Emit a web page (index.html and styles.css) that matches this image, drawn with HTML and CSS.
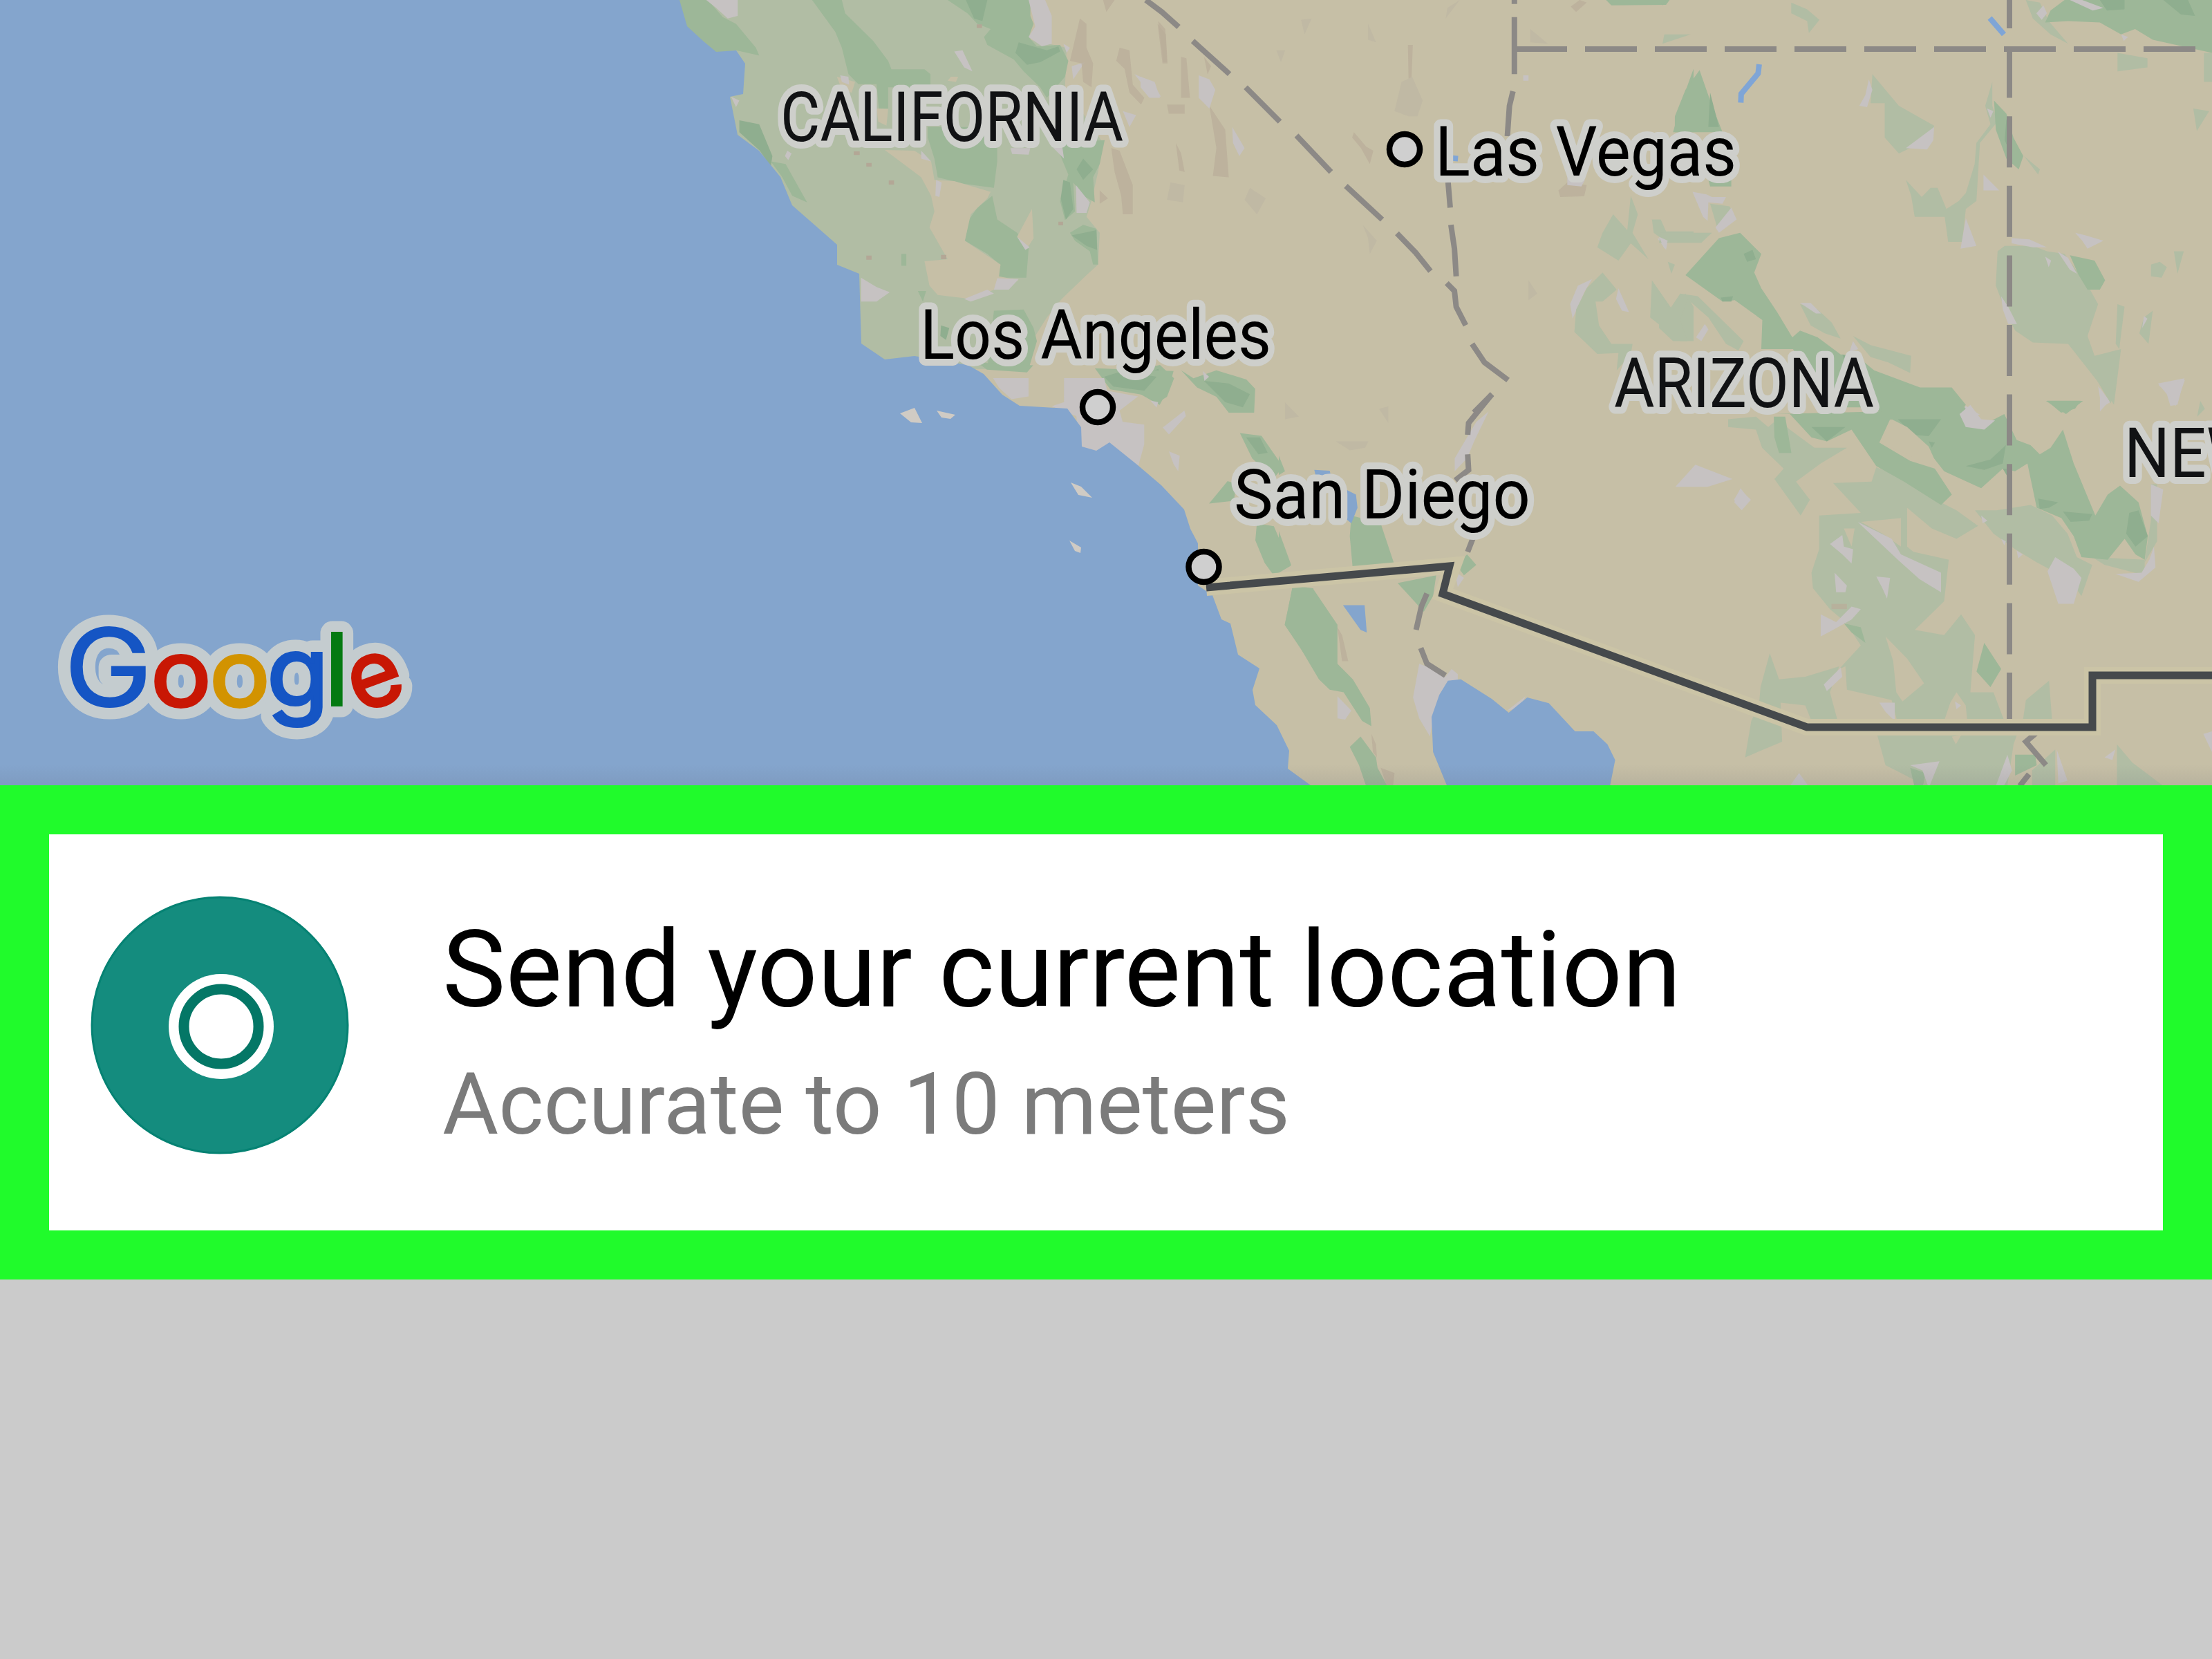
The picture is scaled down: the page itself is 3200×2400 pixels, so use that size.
FILE: index.html
```html
<!DOCTYPE html>
<html lang="en">
<head>
<meta charset="utf-8">
<title>Send location</title>
<link rel="stylesheet" href="styles.css">
</head>
<body>
<main class="screen">
  <section class="map">
    <svg class="map-canvas" viewBox="0 0 3200 1136" width="3200" height="1136">
      <defs>
        <linearGradient id="edge" x1="0" y1="0" x2="0" y2="1">
          <stop offset="0" stop-color="#555566" stop-opacity="0"/>
          <stop offset="1" stop-color="#555566" stop-opacity=".12"/>
        </linearGradient>
      </defs>

      <!-- northern and central California -->
      <g transform="translate(950 0) scale(.4783 .38265)">
        <path class="pale" d="M0 0H1130L1130 150L1240 180L1235 330L1350 540L1335 650L1315 760L1300 820L1340 880L1335 1000L1300 1040L1225 1130L1180 1200L1130 1300L1120 1395H500L0 1000Z"/>
        <path class="green" d="M60 0H155L200 65L240 90L300 180L310 210L240 190L180 200L90 100ZM470 0H560L570 50L655 155L700 230L710 262H810L828 280V330H700V410H672L665 318H610L580 280L560 180L540 120ZM880 0H1130V60L1140 90L1125 140L1150 175L1220 170L1245 230L1235 290L1180 370L1160 330L1110 270L1080 225L1000 170L990 140L1010 110L970 90L940 50ZM820 480H1030V610L1020 710L930 695L850 670L840 600L820 520ZM1015 740L1030 830L1090 880L1125 940L1118 1050H1035L1038 1000L1000 960L932 910L945 830L970 785ZM1205 540L1355 530L1340 620L1320 670L1325 765L1290 740L1260 690L1265 800L1235 832L1220 760L1245 660ZM1250 880L1290 850L1330 865L1335 1000L1320 1000L1310 950L1265 910ZM1020 1175L1110 1170L1140 1240L1150 1290L1125 1395L1000 1395Z"/>
        <path class="deep" d="M250 455L310 470L350 590L345 630L312 570L250 500ZM1095 160L1180 190L1215 175L1220 195L1160 235L1120 245L1085 200ZM1255 890L1330 870L1332 945L1300 930ZM1290 600L1320 640L1290 680L1270 640ZM935 0H1000L985 80L960 70ZM1230 680L1250 690L1260 790L1238 830L1222 750ZM860 1230L885 1240L875 1285L858 1270Z"/>
        <path class="green" d="M345 610L390 620L455 765L410 740L380 670ZM740 960H755V1005H740ZM790 1100L815 1100L805 1140Z"/>
        <path class="land" d="M690 567L780 570L830 610L840 680L900 685L1010 725L1000 750L950 810L932 910L1040 1000L1035 1045L1095 1060L1010 1100L950 1130L850 1115L825 1080L810 988L880 980L825 860L840 800L830 740L800 670ZM1135 790L1140 900L1120 940L1090 895ZM665 410L700 412L695 475L670 460ZM890 290L912 290L905 310L880 305ZM545 290L600 310L590 350L560 340Z"/>
        <path class="urban" d="M150 0H245V60L215 70L180 30ZM1125 0H1175L1195 60V165L1165 175L1125 140L1145 100ZM900 195L925 190L955 270L930 255ZM1230 165L1250 180L1240 200ZM555 285L580 290L582 320L560 310ZM1268 700L1310 765L1300 805L1270 805ZM1090 895L1128 935L1115 945ZM618 1050L665 1085L705 1105L665 1140L618 1140ZM1030 1052L1095 1055L1065 1095H1020ZM930 1130L1000 1095L1020 1110L950 1140ZM395 570L408 580L398 605L388 590ZM845 680L862 690L855 745L843 740ZM800 570L830 610L800 600ZM1255 250L1295 235L1260 300ZM1070 560L1130 560L1125 585L1075 582ZM1445 280L1500 310L1525 365H1490L1470 320ZM1410 420L1450 435L1430 480ZM225 365L250 380L240 405ZM1200 560L1225 540L1232 600Z"/>
        <path class="range" d="M1280 70L1300 90L1300 180L1320 240L1315 330L1290 310L1285 240L1250 230ZM1400 180L1430 190L1440 320L1475 370L1465 395L1430 350L1415 260L1390 230ZM1375 560L1400 570L1440 700L1440 810H1410L1405 740L1385 650ZM1340 720L1365 750L1340 770ZM1515 90L1540 130L1545 240H1530ZM1350 0H1385L1360 45Z"/>
        <path class="city-dot" d="M596 572h18v14h-18zM634 616h16v14h-16zM702 682h16v16h-16zM634 966h16v16h-16zM860 964h16v16h-16zM968 92h16v14h-16zM1215 838h14v14h-14z"/>
      </g>

      <!-- Nevada and western Arizona -->
      <g transform="translate(1650 0) scale(.5102 .38265)">
        <path class="range" d="M50 80L70 110L75 235H65ZM115 215L130 220L140 370H115ZM195 400L240 490L250 670L205 665L215 560ZM75 395H125V430H80ZM100 540L115 580L125 650L110 645ZM758 170H772L768 300H760ZM605 500L640 555L660 570L650 620L625 560L600 520ZM1185 720L1210 690L1265 700L1258 742L1190 745ZM1220 25L1245 0L1265 10L1235 45ZM180 215L200 250L190 280Z"/>
        <path class="haze" d="M740 310L770 290L800 380L785 440H760L720 420ZM310 710L355 750L330 810L295 755ZM85 690L125 700L120 765L75 755ZM645 90L668 160L645 150ZM870 30L905 0L865 70ZM455 75L485 70L465 130ZM630 850L670 910L650 960L645 900ZM1100 1060L1125 1110L1100 1135ZM385 190H410L398 235ZM1105 110L1155 165L1105 160Z"/>
        <path class="urban" d="M0 290L40 310L55 370H25L0 330ZM165 285L195 300L212 340L195 410L165 370ZM260 480L295 560L280 590L262 540ZM1240 1080L1280 1055L1260 1100L1225 1205L1218 1150ZM1355 1090L1385 1180L1365 1175L1348 1130ZM1210 670L1260 680L1250 705L1210 700ZM1085 285H1100V305H1085ZM1465 900L1495 910L1490 945Z"/>
        <path class="pale" d="M1340 810L1380 870L1390 740L1410 810L1395 880L1440 980L1390 920L1355 985L1295 935L1310 880ZM1310 1030L1350 1095L1310 1140L1290 1140L1300 1230L1335 1300L1395 1300L1390 1340L1350 1400L1355 1335L1295 1338L1230 1255L1235 1170L1265 1090ZM1450 1060L1505 1165L1545 1110L1568 1160V1290L1530 1290L1445 1200ZM1450 830L1475 830L1490 875H1568V915H1490L1455 880ZM1485 130H1560L1480 165ZM1495 990L1515 1000L1505 1035Z"/>
        <path class="green" d="M1320 0H1500L1490 18L1335 20ZM1568 260V500H1510L1530 400Z"/>
        <path class="green" d="M0 1395L55 1380L95 1430L75 1500L45 1525L0 1490ZM115 1400L150 1430L215 1400L300 1435L325 1470L322 1560H250L215 1500L160 1465Z"/>
        <path class="deep" d="M0 1420L50 1395L70 1440L45 1500L0 1490ZM180 1440L250 1450L310 1490L290 1540L240 1520Z"/>
        <path class="river" d="M885 598L900 600"/>
      </g>

      <!-- northern Arizona and New Mexico -->
      <g transform="translate(2400 0) scale(.5102 .38265)">
        <path class="pale" d="M605 280L680 400L780 475L775 520L680 580L640 520V390L600 390ZM700 680L745 745L770 710L790 710L815 790L850 760L870 730L895 620L900 540L940 470L925 400L945 310V400L960 460L910 540L900 760L870 790L860 915H820L810 820H725L715 740ZM980 930L1060 930L1100 950L1150 960L1220 1090L1245 1150L1215 1270L1235 1345L1310 1320L1290 1530L1260 1470L1160 1300L1060 1295L1010 1250L990 1200L955 1080L960 950ZM400 1150L450 1170L490 1220L515 1280L470 1260L430 1230ZM550 1270L600 1305L715 1345L712 1410L650 1370L600 1350ZM1300 1150L1320 1160L1305 1320L1295 1300ZM1375 1200L1400 1175L1388 1300L1362 1260ZM1300 200L1385 220V255L1300 270ZM1420 990L1440 1010L1425 1050L1395 1045L1395 1000ZM1460 950L1488 950L1470 1035ZM1515 410L1560 420L1525 495ZM1040 0L1080 10L1105 80L1160 165L1110 130L1060 70ZM375 10L420 35L455 75L425 125L420 80L375 50ZM60 1110L110 1120L240 1290L225 1325L190 1300L140 1200L80 1130L60 1210L80 1290H40L0 1240V1100L30 1170ZM5 880H150L120 918H0ZM145 770L200 780L215 820L165 860ZM1035 590L1080 640L1075 660ZM1545 200H1568V310H1545Z"/>
        <path class="green" d="M115 265L145 380L180 500H45V440L75 340ZM170 900L230 880L290 960L270 1030L290 1090L335 1180L378 1275L400 1250L450 1275L515 1340L560 1345L610 1400L740 1465H830L870 1530L850 1568H640L600 1540H480L380 1320H290L293 1210L215 1135L180 1140L75 1040ZM950 380L985 430L1005 520L1033 590L1020 640L985 600L955 490ZM1095 85L1110 40L1150 0H1568V200L1400 150L1350 110L1310 130L1250 85L1160 80ZM1165 965L1235 985L1265 1060L1250 1095L1215 1095L1190 1040ZM1100 1515H1195L1180 1545L1140 1560ZM0 0H20L10 20ZM140 680H205V705H145Z"/>
        <path class="deep" d="M145 350L170 480H140ZM985 450L1000 540L995 575L980 530ZM240 960L265 945L275 980L250 990ZM175 1125L210 1120L205 1140H180ZM1250 0H1320V35L1270 40ZM1430 0H1500L1520 60L1480 55ZM520 1340L570 1360L590 1420H540Z"/>
        <path class="urban" d="M595 300L605 340L590 405L568 400L585 360ZM780 480L778 530L760 565L700 560L740 520ZM920 660L965 720L920 720ZM870 825L900 930L855 940ZM1000 900L1050 905L1100 935L1060 935L1000 920ZM1130 950L1160 975L1185 1035L1165 1020ZM1180 880L1210 890L1260 910L1215 940L1200 910ZM970 1120L990 1160L1015 1225L990 1225L975 1170ZM1245 1460L1280 1520L1255 1540ZM1415 1450L1490 1430L1470 1530L1450 1535L1440 1490ZM1070 50L1090 20L1100 50L1085 75ZM1165 0H1200L1260 30L1230 40ZM95 725L135 735L150 745H190L180 770L140 765L138 835L125 820ZM205 785L220 830L170 880L160 860ZM0 895L25 910L15 940ZM130 1225L140 1245L120 1290L105 1275ZM400 1145L430 1145L460 1185L445 1185ZM930 410L948 420L940 445ZM1310 130L1330 140L1318 155ZM870 1535L910 1568H850ZM1375 1195L1385 1205L1370 1240ZM550 1290L565 1320L540 1330ZM1095 970L1112 985L1105 1010Z"/>
        <path class="river" d="M284 243L281 278L233 355L232 388M938 68L978 130"/>
      </g>

      <!-- southern Arizona and New Mexico -->
      <g transform="translate(2500 550) scale(.4464 .3763)">
        <path class="pale" d="M0 150L90 140L130 180L160 150L200 190L280 260L385 260L300 320L220 390L265 460L235 520L150 380L180 340L110 260L90 190L0 180ZM340 395L465 390L480 335L560 370L640 440L740 500L810 560L740 610L660 570L580 490V640L600 660L715 690L700 850L605 960L700 980L755 900L800 980L785 1200L860 1200L895 1310L700 1320H550L530 1230L385 1190L380 1100L360 1110L430 1020L380 930L330 880L275 800L270 740L295 650V520L430 510ZM800 500L870 500L980 480L1050 520L1100 590L1130 680L1180 710L1145 830L1110 770L1000 700L930 650L860 590ZM135 1050L165 1150L250 1140L360 1100L330 1200L355 1310H270L250 1250L170 1240L175 1390L55 1450L75 1310L100 1250L105 1180ZM480 1350H940L925 1400L905 1560H640L560 1510L510 1480ZM955 1310L965 1230L1040 1155L1050 1310ZM1260 1400L1310 1470L1420 1568H1260ZM1180 680L1350 690L1350 750L1220 710ZM1370 400L1390 400V620L1350 700L1370 540ZM1195 0H1260L1240 90ZM985 1500L1060 1420L1060 1560H985ZM1530 80L1545 110L1520 140Z"/>
        <path class="land" d="M430 545L560 530V640L500 590ZM510 985L580 1070L635 1165L565 1235L545 1200L535 1080ZM740 1200L770 1250L775 1310H700L720 1240ZM725 1370L755 1365L738 1400ZM375 570L410 570L400 640Z"/>
        <path class="green" d="M460 0H520L620 30H720L770 110L830 170L895 130L935 230L980 250L1010 285L1045 260L1085 190L1120 320L1190 520L1230 440L1270 405L1330 470L1360 600L1350 690L1320 670L1285 610L1230 690L1145 680L1120 600L1080 530L1000 490L970 320L930 350L890 340L820 415L700 350L640 260L525 150L490 240L590 310L670 340L725 440L690 480L570 390L480 330L400 190L320 235L270 220L200 130H150L500 120ZM148 140H185L205 280H165L150 220ZM830 1010L885 1110L850 1180L805 1120ZM375 935L430 950L445 1010L400 970ZM1030 80H1150L1095 130ZM930 1440L995 1440L1000 1480L930 1520ZM590 1490L640 1510L630 1568H605Z"/>
        <path class="deep" d="M550 150H690L650 215L600 210ZM770 330L850 305L900 250L890 320L830 345ZM1005 455L1070 470L1040 490L1010 495ZM1085 505L1180 515L1170 540L1110 545ZM1300 510L1330 500L1360 600L1320 640L1290 590ZM890 340L920 340L910 380ZM270 180H380L320 235ZM650 235L670 240L660 260Z"/>
        <path class="land" d="M530 150L580 180L650 255L680 335L590 290L495 240Z"/>
        <path class="urban" d="M750 130L785 95L820 150L865 155L830 190L770 180ZM1035 735L1060 680L1120 725L1145 760L1120 860H1070ZM420 545L480 580L530 610L560 670L690 740V815L620 765L550 690ZM330 630L370 595L375 640L405 650L400 705L370 670ZM480 755L525 760L515 840L500 800ZM345 740L385 790L380 815H350ZM300 900L350 930L400 870L430 880L400 920L340 960L300 985ZM40 415L70 460L40 495L20 470ZM310 1170L365 1105L370 1140L320 1195ZM490 1240H540V1310L510 1275ZM590 1480L685 1465L650 1568L630 1500ZM905 1440L920 1500L890 1568H865ZM1065 1420L1100 1540L1070 1550ZM1220 1450L1255 1420L1245 1460ZM1370 400L1410 420L1395 550L1370 520ZM1380 640L1385 720L1330 775L1255 745L1340 740L1365 690ZM1205 30L1235 80L1205 120ZM1395 20L1480 0L1450 100L1430 50ZM230 1510L260 1560H200ZM1540 1360L1568 1350V1430ZM820 520L840 540L825 550ZM935 655L955 670L940 685ZM735 1235L755 1250L740 1265ZM885 610L900 620L895 635Z"/>
        <path class="range" d="M335 860H385V880H335Z"/>
      </g>

      <!-- Los Angeles basin -->
      <g transform="translate(1200 500) scale(.4464 .4082)">
        <path class="green" d="M480 60L660 70L640 95L510 85ZM860 80L1115 90L1100 150L1070 210L1020 175L910 155ZM1330 310L1400 320L1470 430L1440 470L1370 400ZM1290 480L1320 490L1310 550L1230 560ZM1385 630L1440 640L1495 780L1440 815L1410 770L1380 690ZM1500 860H1568V1140L1475 990Z"/>
        <path class="deep" d="M890 110L950 90L1060 110L1020 160L920 145ZM1350 325L1395 325L1420 380L1390 385Z"/>
        <path class="urban" d="M530 115H645V180L590 190L550 150ZM760 115H890L900 160L1000 180L940 230L950 270L1020 280L1020 350L1000 430L905 350L860 380L810 365L800 250L720 215L760 200ZM1150 230L1155 250L1100 315L1080 290ZM1100 375L1135 390L1130 445L1115 420ZM1210 90L1230 110L1215 125ZM1040 195L1065 200L1060 220Z"/>
      </g>

      <!-- Baja California, Salton Sea -->
      <g transform="translate(1850 550) scale(.4464 .3763)">
        <path class="green" d="M0 580L40 710L0 740ZM235 520L330 550L375 710L330 730H240L230 600ZM385 780L510 750L500 830L470 890ZM575 710L610 670L640 710L600 750ZM45 790L110 800L190 940V1090L240 1150L295 1260L300 1330L270 1310L210 1200L165 1190L130 1150L70 1030L20 940ZM265 1370L315 1450L320 1490L355 1568H285L260 1480L230 1410ZM0 290L20 350L0 365Z"/>
        <path class="range" d="M190 950L205 980L225 1080L205 1080ZM300 1360L315 1400L318 1450L305 1430ZM330 1490L375 1510L370 1560H350Z"/>
        <path class="haze" d="M185 235H290L280 260L230 270ZM20 85L65 140L20 150ZM325 110L355 100V165Z"/>
        <path class="urban" d="M455 1090L500 1110L540 1140L560 1110L580 1130V1160L540 1180L500 1300L490 1370L455 1300L435 1220ZM190 1215L235 1270L215 1305L190 1300ZM610 220L640 160L680 120L635 230L610 300L570 350V300ZM570 735L600 760L580 795ZM1285 410L1350 325L1470 380L1390 410ZM1495 420L1530 460L1500 500L1475 460ZM740 1270L800 1215L780 1260Z"/>
        <path class="water" d="M115 345L165 348L170 375L120 370ZM160 400L200 410L250 440L255 490L235 550L215 530L220 460L170 440ZM208 865H278L285 970L265 960Z"/>
        <path class="water" d="M548 1155L590 1150L690 1225L745 1278L805 1220L875 1242L960 1350H1020L1065 1400L1090 1460L1072 1568H548L500 1430L495 1295L520 1210Z"/>
      </g>

      <!-- Pacific coastline and islands -->
      <path class="water" d="M0 0H983L994 38L1018 60L1036 75L1065 73L1078 92L1075 136L1056 140L1067 195L1098 218L1129 256L1146 297L1178 325L1211 354V383L1243 396L1246 497L1280 520L1323 515L1400 528L1423 541L1450 571L1475 587L1544 591L1564 618L1565 646L1586 652L1605 640L1646 673L1680 702L1713 737L1722 765L1733 786V847L1754 861L1767 896L1780 902L1791 947L1822 967L1812 998L1816 1020L1847 1049L1865 1086L1863 1112L1896 1136H0Z"/>
      <path class="island" d="M1302 598L1323 590L1334 612L1318 611ZM1355 594L1382 600L1375 606L1362 604ZM1549 698L1564 704L1580 720L1560 716ZM1547 782L1564 792L1563 800L1555 797Z"/>

      <!-- state lines -->
      <path class="state-line vertical" d="M2907 -33V1050"/>
      <path class="state-line horizontal" d="M2192 71H3186"/>
      <g transform="translate(1650 0) scale(.5102 .38265)">
        <path class="state-line" d="M15 0L60 45L108 102M148 155L252 280M298 330L395 460M442 512L540 650M582 703L685 830M727 882L780 955L822 1025M868 1070L890 1100L895 1160L922 1230M940 1300L975 1370L1042 1437M997 1490L945 1560M1060 0V15M1060 65V280M1056 345L1046 400L1040 515M872 690L878 785M880 850L890 940L895 1045"/>
      </g>
      <g transform="translate(1850 550) scale(.4464 .3763)">
        <path class="state-line" d="M690 55L615 165L612 210M612 285L615 345L572 385M630 605L612 660M480 820L462 870L445 960M460 1030L480 1090L540 1135"/>
      </g>
      <g transform="translate(2500 550) scale(.4464 .3763)">
        <path class="state-line" d="M1000 1355L965 1390L1030 1480M975 1515L945 1560"/>
      </g>

      <!-- international border -->
      <path class="border-glow" d="M1745 850L2102 818L2087 859L2614 1052H3027V977H3200"/>
      <path class="border-line" d="M1745 850L2097 819L2087 859L2614 1052H3027V977H3200"/>

      <g class="pins">
        <circle cx="2032" cy="216" r="22"/>
        <circle cx="1588" cy="589" r="22"/>
        <circle cx="1741.500" cy="820" r="22"/>
      </g>

      <g class="labels">
        <text class="region" x="1129" y="204" textLength="496" lengthAdjust="spacingAndGlyphs">CALIFORNIA</text>
        <text class="region" x="2335" y="589" textLength="376" lengthAdjust="spacingAndGlyphs">ARIZONA</text>
        <text class="region" x="3073" y="690" textLength="201" lengthAdjust="spacingAndGlyphs">NEW</text>
        <text x="2076" y="254" textLength="436" lengthAdjust="spacingAndGlyphs">Las Vegas</text>
        <text x="1331" y="519" textLength="508" lengthAdjust="spacingAndGlyphs">Los Angeles</text>
        <text x="1785" y="750" textLength="429" lengthAdjust="spacingAndGlyphs">San Diego</text>
      </g>

      <rect x="0" y="1106" width="3200" height="30" fill="url(#edge)"/>

      <g class="brand" aria-label="Google">
        <g class="brand-halo">
          <text class="cap" transform="translate(93 1021) scale(1.1 1)">G</text><text transform="translate(218 1021) scale(1.1 1)">o</text><text transform="translate(303 1021) scale(1.1 1)">o</text><text transform="translate(386 1021) scale(1.1 1.05)">g</text><text class="stem" x="470" y="1020">l</text><text transform="translate(519 1032) rotate(-20)">e</text>
        </g>
        <text class="cap blue" transform="translate(93 1021) scale(1.1 1)">G</text><text class="red" transform="translate(218 1021) scale(1.1 1)">o</text><text class="yellow" transform="translate(303 1021) scale(1.1 1)">o</text><text class="blue" transform="translate(386 1021) scale(1.1 1.05)">g</text><text class="stem leaf" x="470" y="1020">l</text><text class="red" transform="translate(519 1032) rotate(-20)">e</text>
      </g>
    </svg>
  </section>

  <section class="location">
    <svg class="location-icon" viewBox="0 0 374 374" width="374" height="374">
      <circle cx="187" cy="187" r="185" fill="#148c7e" stroke="#058273" stroke-width="3"/>
      <circle cx="189" cy="189" r="76" fill="#fff"/>
      <circle cx="189" cy="189" r="54" fill="#fff" stroke="#047766" stroke-width="15"/>
    </svg>
    <div class="location-text">
      <h1 class="location-title">Send your current location</h1>
      <p class="location-detail">Accurate to 10 meters</p>
    </div>
  </section>
</main>
</body>
</html>
```
FILE: styles.css
```css
* { box-sizing: border-box; }

body {
  margin: 0;
  background: #cbcbcb;
  font-family: Roboto, "Liberation Sans", sans-serif;
}

.screen {
  display: flex;
  flex-direction: column;
  width: 3200px;
  height: 2400px;
  overflow: hidden;
}

.map {
  height: 1136px;
  background: #c6bfa6;
  overflow: hidden;
}

.map-canvas { display: block; }

.water { fill: #84a5cd; }
.land { fill: #c6bfa6; }
.pale { fill: #b1bda4; }
.green { fill: #9db798; }
.deep { fill: #8fae8f; }
.urban { fill: #c6c2c2; }
.range { fill: #b9ad9a; opacity: .75; }
.haze { fill: #c0b9a4; }
.city-dot { fill: #b3a796; }
.island { fill: #d0cbc4; }

.river {
  fill: none;
  stroke: #7fa5d6;
  stroke-width: 8;
  vector-effect: non-scaling-stroke;
}

.state-line {
  fill: none;
  stroke: #8c8986;
  stroke-width: 8;
  vector-effect: non-scaling-stroke;
}

.vertical { stroke-dasharray: 74 26.600; }
.horizontal { stroke-dasharray: 75 26; }

.border-glow {
  fill: none;
  stroke: #cbc4a6;
  stroke-width: 24;
}

.border-line {
  fill: none;
  stroke: #45494c;
  stroke-width: 11;
}

.pins circle {
  fill: #cfcfcf;
  stroke: #000;
  stroke-width: 8.5px;
}

.labels text {
  font-family: Roboto, "Liberation Sans", sans-serif;
  font-size: 100px;
  fill: #000;
  stroke: #cecfcb;
  stroke-width: 20px;
  stroke-linejoin: round;
  paint-order: stroke;
}

.labels .region { fill: #111214; }

.brand text {
  font-family: Inter, "Open Sans", sans-serif;
  font-size: 133px;
  stroke-width: 4px;
}

.brand .cap { font-size: 155px; stroke-width: 2px; }
.brand .stem { font-size: 143px; }

.brand .brand-halo text {
  fill: #c4cccf;
  stroke: #c4cccf;
  stroke-width: 35px;
  stroke-linejoin: round;
}

.brand .blue { fill: #1555c4; stroke: #1555c4; }
.brand .red { fill: #c81704; stroke: #c81704; }
.brand .yellow { fill: #d29300; stroke: #d29300; }
.brand .leaf { fill: #047a12; stroke: #047a12; }

.location {
  display: flex;
  align-items: flex-start;
  height: 715px;
  padding: 89px 60px 0;
  gap: 135px;
  border: 71px solid #20fb2b;
  background: #fff;
}

.location-icon { flex: none; }

.location-text {
  display: flex;
  flex-direction: column;
  padding-top: 16px;
  white-space: nowrap;
}

.location-title {
  margin: 0;
  font-size: 154px;
  font-weight: 400;
  line-height: 184px;
  color: #000;
}

.location-detail {
  margin: 0;
  font-size: 124.500px;
  font-weight: 400;
  line-height: 202px;
  color: #7b7b7b;
}
```
